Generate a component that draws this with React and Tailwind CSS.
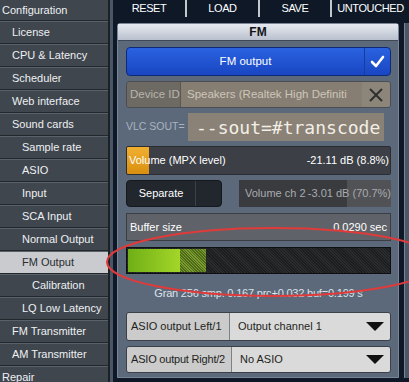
const SIDE = [
  ['Configuration', 2],
  ['License', 12],
  ['CPU & Latency', 12],
  ['Scheduler', 12],
  ['Web interface', 12],
  ['Sound cards', 12],
  ['Sample rate', 22],
  ['ASIO', 22],
  ['Input', 22],
  ['SCA Input', 22],
  ['Normal Output', 22],
  ['FM Output', 22, true],
  ['Calibration', 32],
  ['LQ Low Latency', 22],
  ['FM Transmitter', 12],
  ['AM Transmitter', 12],
  ['Repair', 2],
]

const TOP = [
  ['RESET', 'w-[72px]'],
  ['LOAD', 'w-[71px]'],
  ['SAVE', 'w-[70px]'],
  ['UNTOUCHED', 'w-[77px]'],
]

const Triangle = () => (
  <svg width="20" height="11" viewBox="0 0 20 11">
    <polygon points="1,1 19,1 10,10" fill="#111" />
  </svg>
)

export default function App() {
  return (
    <div className="relative w-[409px] h-[382px] overflow-hidden flex bg-[#0e1827] font-['Liberation_Sans',Arial,sans-serif] text-[11px]">

      {/* Sidebar */}
      <aside className="w-[110px] shrink-0 flex flex-col bg-[#3f464e] border-r-2 border-[#1c2126]">
        {SIDE.map(([label, indent, active], i) => (
          <div key={label}
            className={`shrink-0 flex items-center border-t border-b border-t-[#59616a] border-b-[#23282d]
              ${i === 0 ? 'h-[21px] border-t-0' : 'h-[23px]'}
              ${active ? 'bg-[#c9cbce] text-[#2a2d31]' : 'text-[#eef0f2]'}`}
            style={{ paddingLeft: indent }}>
            {label}
          </div>
        ))}
      </aside>
      <div className="w-[3px] shrink-0 bg-[#4a5565]" />

      {/* Main */}
      <main className="flex-1 flex flex-col">
        <div className="h-[23px] flex items-start text-white tracking-[-0.4px]">
          {TOP.map(([label, w], i) => (
            <div key={label} className="flex items-start">
              {i > 0 && <div className="w-[2px] h-[17px] bg-[#c3c8cf]" />}
              <div className={`${w} h-[17px] flex items-center justify-center`}>{label}</div>
            </div>
          ))}
        </div>

        <div className="flex">
          <section className="ml-[4px] w-[282px] h-[355px] flex flex-col bg-[#5b697b] border border-[#7a8697] rounded-t-[3px]">
            <div className="h-[17px] flex items-center justify-center bg-[linear-gradient(to_bottom,#e6e9f0,#b9c0cd)] border-b border-[#3e4856] font-bold text-[12px] text-[#121416]">
              FM
            </div>

            <div className="flex flex-col pl-[8px] pr-[7px] pt-[6px]">
              {/* FM output */}
              <div className="h-[29px] flex rounded-[4px] border border-[#0d2a78] bg-[linear-gradient(to_bottom,#2a62e0,#1946c2)] text-white text-[11.5px]">
                <div className="flex-1 flex items-center justify-center">FM output</div>
                <div className="w-[26px] flex items-center justify-center border-l border-[#163c9e]">
                  <svg width="15" height="13" viewBox="0 0 15 13">
                    <polyline points="2,7 6,11 13,2" fill="none" stroke="#fff" strokeWidth="2.6" strokeLinecap="round" strokeLinejoin="round" />
                  </svg>
                </div>
              </div>

              {/* Device ID */}
              <div className="mt-[5px] h-[27px] flex rounded-[3px] overflow-hidden border border-[#4b4d50] text-[11.5px]">
                <div className="w-[54px] flex items-center pl-[3px] bg-[#6d6a64] text-[#b9b4ac] border-r border-[#5a5752]">Device ID</div>
                <div className="flex-1 flex items-center pl-[6px] bg-[#867e72] text-[#cdc6ba] whitespace-nowrap overflow-hidden">Speakers (Realtek High Definiti</div>
                <div className="w-[28px] flex items-center justify-center bg-[#8c857a]">
                  <svg width="14" height="14" viewBox="0 0 14 14">
                    <path d="M1 1L13 13M13 1L1 13" stroke="#2f2f2f" strokeWidth="2" />
                  </svg>
                </div>
              </div>

              {/* VLC SOUT */}
              <div className="mt-[5px] h-[28px] flex items-center">
                <div className="w-[62px] text-[#aab3bf] text-[10.5px]">VLC SOUT=</div>
                <div className="w-[196px] h-full flex items-center pl-[8px] bg-[#8a8276] text-[#f3efe8] font-['DejaVu_Sans_Mono',monospace] text-[18px] font-light whitespace-nowrap overflow-hidden">
                  --sout=#transcode
                </div>
              </div>

              {/* Volume */}
              <div className="mt-[5px] h-[29px] relative flex items-center rounded-[2px] border border-[#2a2d31] bg-[#3c3f45] text-white overflow-hidden">
                <div className="absolute left-0 top-0 bottom-0 w-[22px] bg-[linear-gradient(to_bottom,#f2b030,#d98f10)]" />
                <span className="relative pl-[2px]">Volume (MPX level)</span>
                <span className="relative ml-auto pr-[1px]">-21.11 dB (8.8%)</span>
              </div>

              {/* Separate / Volume ch 2 */}
              <div className="mt-[5px] h-[27px] flex">
                <div className="w-[96px] flex rounded-[4px] bg-[#22272d] border border-[#15181c] text-white">
                  <div className="flex-1 flex items-center justify-center border-r border-[#3a4048]">Separate</div>
                  <div className="w-[25px]" />
                </div>
                <div className="ml-[17px] flex-1 flex items-center bg-[#3a3b3f] text-[#a9abae] whitespace-nowrap relative overflow-hidden">
                  <div className="absolute right-0 top-0 bottom-0 w-[44px] bg-[#505256]" />
                  <span className="relative pl-[6px]">Volume ch 2</span>
                  <span className="relative ml-auto">-3.01 dB (70.7%)</span>
                </div>
              </div>

              {/* Buffer size */}
              <div className="mt-[6px] h-[28px] flex items-center px-[3px] bg-[#5f6369] border border-[#3a3e44] text-white">
                <span>Buffer size</span>
                <span className="ml-auto">0.0290 sec</span>
              </div>

              {/* Meter */}
              <div className="mt-[6px] h-[27px] flex border border-[#0d0f12] bg-[repeating-linear-gradient(45deg,#1c1d1f_0px,#1c1d1f_1px,#2b2c2e_1px,#2b2c2e_2px)] p-[1px]">
                <div className="w-[52px] bg-[linear-gradient(to_right,#6faf16,#a4d629)]" />
                <div className="w-[26px] bg-[repeating-linear-gradient(45deg,#4c6a18_0px,#4c6a18_1px,#7b9a30_1px,#7b9a30_2px)]" />
              </div>

              {/* Gran */}
              <div className="h-[38px] flex items-center justify-center text-[#dde2e8] tracking-[-0.2px] whitespace-nowrap">
                Gran 256 smp. 0.167 prc+0.032 buf=0.199 s
              </div>

              {/* ASIO rows */}
              <div className="h-[29px] flex rounded-[3px] overflow-hidden border border-[#3c4148] text-[#1e1f21] text-[11px]">
                <div className="w-[103px] flex items-center pl-[4px] bg-[#cbcbcb] border-r border-[#7d8084] whitespace-nowrap">ASIO output Left/1</div>
                <div className="flex-1 flex items-center pl-[8px] bg-[#dadada]">Output channel 1</div>
                <div className="w-[30px] flex items-center justify-center bg-[#dadada]"><Triangle /></div>
              </div>
              <div className="mt-[5px] h-[27px] flex rounded-[3px] overflow-hidden border border-[#3c4148] text-[#1e1f21] text-[11px]">
                <div className="w-[105px] flex items-center pl-[4px] bg-[#cbcbcb] border-r border-[#7d8084] whitespace-nowrap tracking-[-0.2px]">ASIO output Right/2</div>
                <div className="flex-1 flex items-center pl-[8px] bg-[#dadada]">No ASIO</div>
                <div className="w-[30px] flex items-center justify-center bg-[#dadada]"><Triangle /></div>
              </div>
            </div>
          </section>
          <div className="ml-[5px] flex-1 h-[355px] bg-[#4c5868] border-l border-[#7a8697]" />
        </div>
      </main>

      {/* Red annotation ellipse */}
      <svg className="absolute inset-0 pointer-events-none" width="409" height="382">
        <ellipse cx="273" cy="262" rx="166" ry="34" fill="none" stroke="#e03a3a" strokeWidth="2" />
      </svg>
    </div>
  )
}
